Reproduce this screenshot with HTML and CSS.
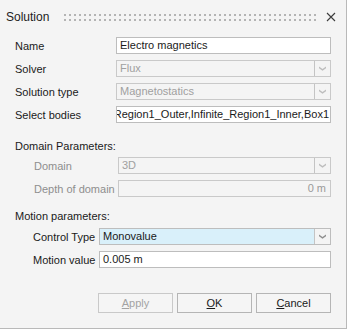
FILE: index.html
```html
<!DOCTYPE html>
<html lang="en">
<head>
  <meta charset="UTF-8">
  <title>Solution</title>
  <link rel="stylesheet" href="styles.css">
</head>
<body>
<div class="window">
  <div class="titlebar">
    <span class="title">Solution</span>
    <div class="grip"></div>
    <svg class="close" width="10" height="10" viewBox="0 0 10 10">
      <path d="M1 1 L9 9 M9 1 L1 9" stroke="#3c3c3c" stroke-width="1.1" fill="none"/>
    </svg>
  </div>

  <div class="grid main-grid">
    <label>Name</label>
    <div class="field">Electro magnetics</div>

    <label>Solver</label>
    <div class="combo disabled">
      <div class="combo-value">Flux</div>
      <div class="combo-btn"><svg width="7" height="5" viewBox="0 0 7 5"><polygon points="0,0.5 3.5,3 7,0.5 7,2.2 3.5,4.7 0,2.2"/></svg></div>
    </div>

    <label>Solution type</label>
    <div class="combo disabled">
      <div class="combo-value">Magnetostatics</div>
      <div class="combo-btn"><svg width="7" height="5" viewBox="0 0 7 5"><polygon points="0,0.5 3.5,3 7,0.5 7,2.2 3.5,4.7 0,2.2"/></svg></div>
    </div>

    <label>Select bodies</label>
    <div class="field scrolled"><span>Infinite_Region1_Outer,Infinite_Region1_Inner,Box1</span></div>
  </div>

  <div class="section-title first">Domain Parameters:</div>
  <div class="grid domain-grid">
    <label class="muted">Domain</label>
    <div class="combo disabled">
      <div class="combo-value">3D</div>
      <div class="combo-btn"><svg width="7" height="5" viewBox="0 0 7 5"><polygon points="0,0.5 3.5,3 7,0.5 7,2.2 3.5,4.7 0,2.2"/></svg></div>
    </div>

    <label class="muted">Depth of domain</label>
    <div class="field disabled number">0 m</div>
  </div>

  <div class="section-title">Motion parameters:</div>
  <div class="grid motion-grid">
    <label>Control Type</label>
    <div class="combo active">
      <div class="combo-value">Monovalue</div>
      <div class="combo-btn"><svg width="7" height="5" viewBox="0 0 7 5"><polygon points="0,0.5 3.5,3 7,0.5 7,2.2 3.5,4.7 0,2.2"/></svg></div>
    </div>

    <label>Motion value</label>
    <div class="field">0.005 m</div>
  </div>

  <div class="buttons">
    <button class="btn" disabled><u>A</u>pply</button>
    <button class="btn"><u>O</u>K</button>
    <button class="btn"><u>C</u>ancel</button>
  </div>
</div>
</body>
</html>
```

FILE: styles.css
```css
html, body {
  margin: 0;
  padding: 0;
  background: #f4f4f4;
}

body {
  font-family: "Liberation Sans", Arial, sans-serif;
  font-size: 11px;
  color: #1a1a1a;
}

.window {
  box-sizing: border-box;
  width: 347px;
  height: 329px;
  background: #f4f4f4;
  border-right: 1px solid #b9b9b9;
  border-bottom: 1px solid #b9b9b9;
  padding-right: 15px;
}

.titlebar {
  height: 34px;
  display: flex;
  align-items: center;
  padding-left: 6px;
  margin-right: -15px;
}

.title {
  font-size: 12px;
  color: #222;
}

.grip {
  flex: 1;
  height: 7px;
  margin-left: 15px;
  margin-right: 9px;
  background-image:
    linear-gradient(90deg, transparent 2px, #f4f4f4 2px),
    linear-gradient(#b4b4b4 2px, transparent 2px);
  background-size: 5px 100%, 100% 5px;
}

.close {
  margin-right: 10px;
}

.grid {
  display: grid;
  row-gap: 6px;
  align-items: center;
}

.main-grid {
  grid-template-columns: 101px 1fr;
  padding-left: 15px;
  margin-top: 3px;
}

.domain-grid {
  grid-template-columns: 84px 1fr;
  padding-left: 34px;
  margin-top: 2px;
}

.motion-grid {
  grid-template-columns: 66px 1fr;
  padding-left: 33px;
  margin-top: 3px;
}

label {
  white-space: nowrap;
}

.muted {
  color: #8e8e8e;
}

.section-title {
  height: 17px;
  line-height: 17px;
  padding-left: 15px;
  margin-top: 11px;
}

.section-title.first {
  margin-top: 15px;
}

.field, .combo {
  box-sizing: border-box;
  height: 17px;
  border: 1px solid #bdbdbd;
  background: #fff;
  line-height: 15px;
}

.field {
  padding: 0 3px;
  white-space: nowrap;
  overflow: hidden;
}

.field.scrolled {
  display: flex;
  justify-content: flex-end;
  padding-right: 1px;
}

.field.disabled {
  background: #f4f4f4;
  border-color: #c9c9c9;
  color: #9a9a9a;
}

.field.number {
  text-align: right;
  padding-right: 4px;
}

.combo {
  display: flex;
}

.combo-value {
  flex: 1;
  padding: 0 3px;
}

.combo-btn {
  width: 15px;
  border-left: 1px solid #c4c4c4;
  display: flex;
  align-items: center;
  justify-content: center;
  background: #f4f4f4;
}

.combo-btn svg {
  fill: #8e8e8e;
}

.combo.disabled {
  background: #f4f4f4;
  border-color: #c9c9c9;
  color: #a0a0a0;
}

.combo.disabled .combo-btn svg {
  fill: #bdbdbd;
}

.combo.active .combo-value {
  background: #d9f0fa;
}

.buttons {
  display: flex;
  justify-content: flex-end;
  gap: 4px;
  margin-top: 25px;
}

.btn {
  box-sizing: border-box;
  width: 75px;
  height: 20px;
  padding: 0;
  font-family: "Liberation Sans", Arial, sans-serif;
  font-size: 11px;
  color: #1a1a1a;
  background: #f5f5f5;
  border: 1px solid #b5b5b5;
  border-radius: 0;
}

.btn:disabled {
  color: #a3a3a3;
  border-color: #c9c9c9;
}
```
